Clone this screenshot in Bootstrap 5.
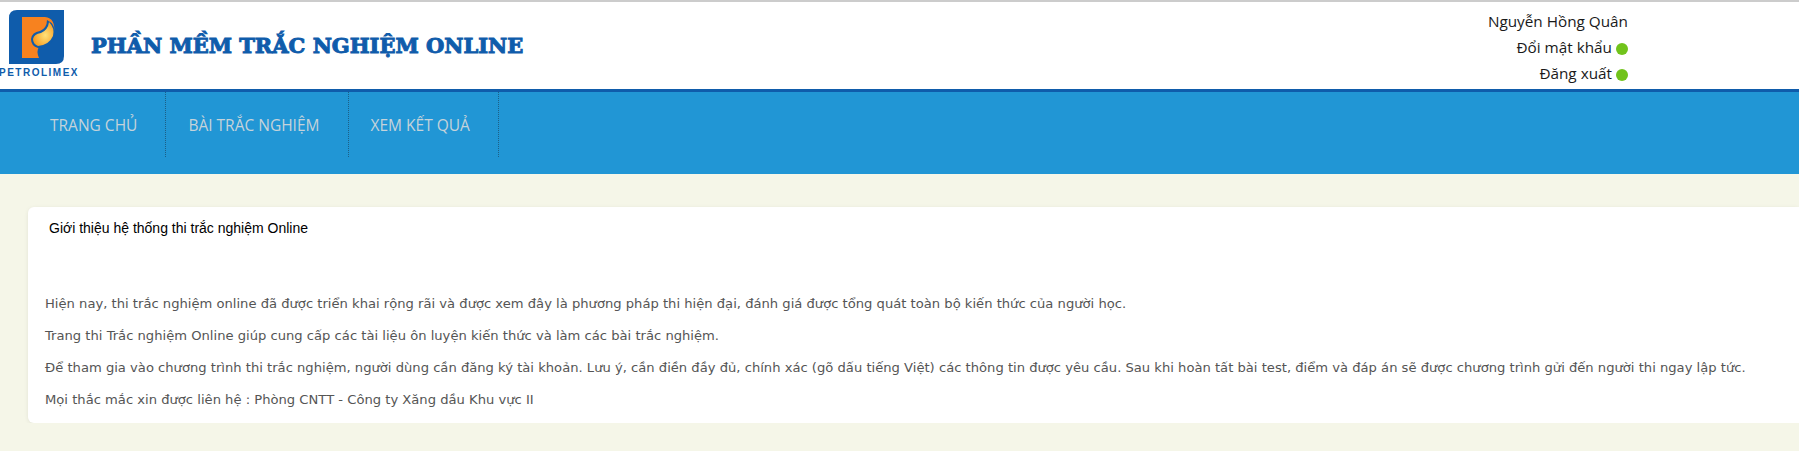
<!DOCTYPE html>
<html lang="vi">

<head>
    <meta charset="UTF-8">
    <meta name="viewport" content="width=device-width, initial-scale=1.0">
    <title>Phần mềm trắc nghiệm online</title>
    <link href="https://cdn.jsdelivr.net/npm/bootstrap@5.3.0/dist/css/bootstrap.min.css" rel="stylesheet">
    <style>
        body {
            background-color: #f5f6e8;
            overflow: hidden;
        }

        .top-head {
            height: 92px;
            background: #fff;
            border-top: 2px solid #ccc;
            border-bottom: 3px solid #0f5cab;
        }

        .logo-box {
            width: 78px;
            padding-top: 8px;
        }

        .logo-box svg {
            display: block;
            margin-left: 9px;
        }

        .logo-name {
            font-family: "Liberation Sans", sans-serif;
            font-weight: 700;
            font-size: 10px;
            line-height: 11px;
            letter-spacing: 1.5px;
            color: #0f5cab;
            margin-top: 3px;
            white-space: nowrap;
            margin-left: -1px;
        }

        .site-title {
            font-family: "DejaVu Serif", serif;
            font-weight: 700;
            font-size: 21px;
            color: #0f5cab;
            margin: 0 0 0 13px;
            -webkit-text-stroke: 1px #0f5cab;
        }

        .user-box {
            width: 180px;
            margin-right: 171px;
            padding-top: 6px;
            font-family: "Open Sans", sans-serif;
            font-size: 15.3px;
            line-height: 26px;
            color: #1a1a1a;
        }

        .dot {
            display: inline-block;
            width: 12px;
            height: 12px;
            border-radius: 50%;
            background: #71c31b;
            margin-left: 4px;
            vertical-align: -2px;
        }

        .main-nav {
            height: 82px;
            background: #2196d5;
            padding-left: 28px;
        }

        .main-nav .nav-link {
            height: 65px;
            line-height: 67px;
            padding: 0 28px 0 22px;
            font-family: "Open Sans", sans-serif;
            font-size: 15.5px;
            color: #c5d3da;
            border-right: 1px dotted #1c5f86;
        }

        .intro-box {
            margin: 33px 0 0 28px;
            height: 216px;
            background: #fff;
            border-radius: 6px 0 0 6px;
            box-shadow: 0 1px 4px rgba(0, 0, 0, 0.08);
            padding: 11px 0 0 17px;
        }

        .intro-title {
            font-family: "Liberation Sans", sans-serif;
            font-size: 14px;
            line-height: 20px;
            color: #000;
            margin: 0 0 55px 4px;
        }

        .intro-box p {
            font-family: "DejaVu Sans", sans-serif;
            font-size: 13.13px;
            line-height: 22px;
            color: #555;
            margin: 0 0 10px;
            white-space: nowrap;
        }
    </style>
</head>

<body>
    <!-- Header -->
    <header class="top-head d-flex align-items-start">
        <div class="logo-box flex-shrink-0">
            <svg width="55" height="54" viewBox="0 0 55 54">
                <defs>
                    <radialGradient id="flame" cx="0.6" cy="0.55" r="0.6">
                        <stop offset="0" stop-color="#ffe27a" />
                        <stop offset="1" stop-color="#f79a1e" />
                    </radialGradient>
                </defs>
                <path d="M8 0H55V46Q55 54 47 54H0V8Q0 0 8 0Z" fill="#0f5cab" />
                <path d="M13 7H36Q47 8 45 24Q42 36 30 37Q27 41 30 48H13Z" fill="#f7821f" />
                <path d="M38 10Q47 14 46 26Q42 38 29 38Q22 36 22 29Q23 22 31 21Q38 18 38 10Z" fill="#0f5cab" />
                <path d="M40 12Q46 18 44 26Q40 35 29 36Q24 34 24 29Q25 24 32 23Q39 20 40 12Z" fill="url(#flame)" />
            </svg>
            <div class="logo-name">PETROLIMEX</div>
        </div>
        <h1 class="site-title align-self-center">PHẦN MỀM TRẮC NGHIỆM ONLINE</h1>
        <div class="user-box ms-auto text-end">
            <div>Nguyễn Hồng Quân</div>
            <div>Đổi mật khẩu<span class="dot"></span></div>
            <div>Đăng xuất<span class="dot"></span></div>
        </div>
    </header>

    <!-- Menu -->
    <nav class="main-nav nav">
        <a class="nav-link" href="#">TRANG CHỦ</a>
        <a class="nav-link" href="#">BÀI TRẮC NGHIỆM</a>
        <a class="nav-link" href="#">XEM KẾT QUẢ</a>
    </nav>

    <!-- Noi dung -->
    <div class="intro-box">
        <div class="intro-title">Giới thiệu hệ thống thi trắc nghiệm Online</div>
        <p>Hiện nay, thi trắc nghiệm online đã được triển khai rộng rãi và được xem đây là phương pháp thi hiện đại, đánh giá được tổng quát toàn bộ kiến thức của người học.</p>
        <p>Trang thi Trắc nghiệm Online giúp cung cấp các tài liệu ôn luyện kiến thức và làm các bài trắc nghiệm.</p>
        <p>Để tham gia vào chương trình thi trắc nghiệm, người dùng cần đăng ký tài khoản. Lưu ý, cần điền đầy đủ, chính xác (gõ dấu tiếng Việt) các thông tin được yêu cầu. Sau khi hoàn tất bài test, điểm và đáp án sẽ được chương trình gửi đến người thi ngay lập tức.</p>
        <p>Mọi thắc mắc xin được liên hệ : Phòng CNTT - Công ty Xăng dầu Khu vực II</p>
    </div>

    <script src="https://cdn.jsdelivr.net/npm/bootstrap@5.3.0/dist/js/bootstrap.bundle.min.js"></script>
</body>

</html>
